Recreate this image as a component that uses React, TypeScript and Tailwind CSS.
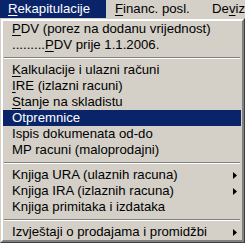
import React from 'react';

type Item =
  | { kind: 'sep' }
  | { kind: 'item'; label: React.ReactNode; sub?: boolean; active?: boolean };

const u = (c: string) => <span className="underline underline-offset-[2px]">{c}</span>;

const ITEMS: Item[] = [
  { kind: 'item', label: <>{u('P')}DV (porez na dodanu vrijednost)</> },
  { kind: 'item', label: <>.........{u('P')}DV prije 1.1.2006.</> },
  { kind: 'sep' },
  { kind: 'item', label: <>{u('K')}alkulacije i ulazni računi</> },
  { kind: 'item', label: <>{u('I')}RE (izlazni racuni)</> },
  { kind: 'item', label: <>{u('S')}tanje na skladistu</> },
  { kind: 'item', label: 'Otpremnice', active: true },
  { kind: 'item', label: 'Ispis dokumenata od-do' },
  { kind: 'item', label: 'MP racuni (maloprodajni)' },
  { kind: 'sep' },
  { kind: 'item', label: 'Knjiga URA (ulaznih racuna)', sub: true },
  { kind: 'item', label: 'Knjiga IRA (izlaznih racuna)', sub: true },
  { kind: 'item', label: 'Knjiga primitaka i izdataka' },
  { kind: 'sep' },
  { kind: 'item', label: 'Izvještaji o prodajama i promidžbi', sub: true },
];

function Arrow({ white }: { white?: boolean }) {
  return (
    <svg width="4" height="7" viewBox="0 0 4 7" className="absolute right-[4px] top-[5px]">
      <path d="M0 0 L4 3.5 L0 7 Z" fill={white ? '#ffffff' : '#000000'} />
    </svg>
  );
}

export default function App() {
  return (
    <div
      className="w-[245px] h-[243px] overflow-hidden bg-[#d4d0c8] text-[13.2px] leading-[16px] text-black"
      style={{ fontFamily: '"Liberation Sans", Arial, sans-serif' }}
    >
      {/* menu bar */}
      <div className="flex h-[18px] items-center whitespace-nowrap">
        <div className="w-[108px] h-[18px] bg-[#0a246a] text-white pl-[8px] leading-[18px]">
          {u('R')}ekapitulacije
        </div>
        <div className="ml-[9px] w-[99px]">{u('F')}inanc. posl.</div>
        <div>De{u('v')}iz</div>
      </div>

      {/* dropdown */}
      <div className="border-2 border-t-[#d4d0c8] border-l-[#d4d0c8] border-r-[#404040] border-b-[#404040]">
        <div className="border-2 border-t-white border-l-white border-r-[#808080] border-b-[#808080] -m-[1px] pr-[1px]">
          {ITEMS.map((it, i) =>
            it.kind === 'sep' ? (
              <div key={i} className="h-[9px] flex flex-col justify-center px-[1px]">
                <div className="h-px bg-[#808080]" />
                <div className="h-px bg-white" />
              </div>
            ) : (
              <div
                key={i}
                className={`relative h-[16px] pl-[9px] whitespace-nowrap ${
                  it.active ? 'bg-[#0a246a] text-white' : ''
                }`}
              >
                {it.label}
                {it.sub && <Arrow white={it.active} />}
              </div>
            )
          )}
        </div>
      </div>
    </div>
  );
}
